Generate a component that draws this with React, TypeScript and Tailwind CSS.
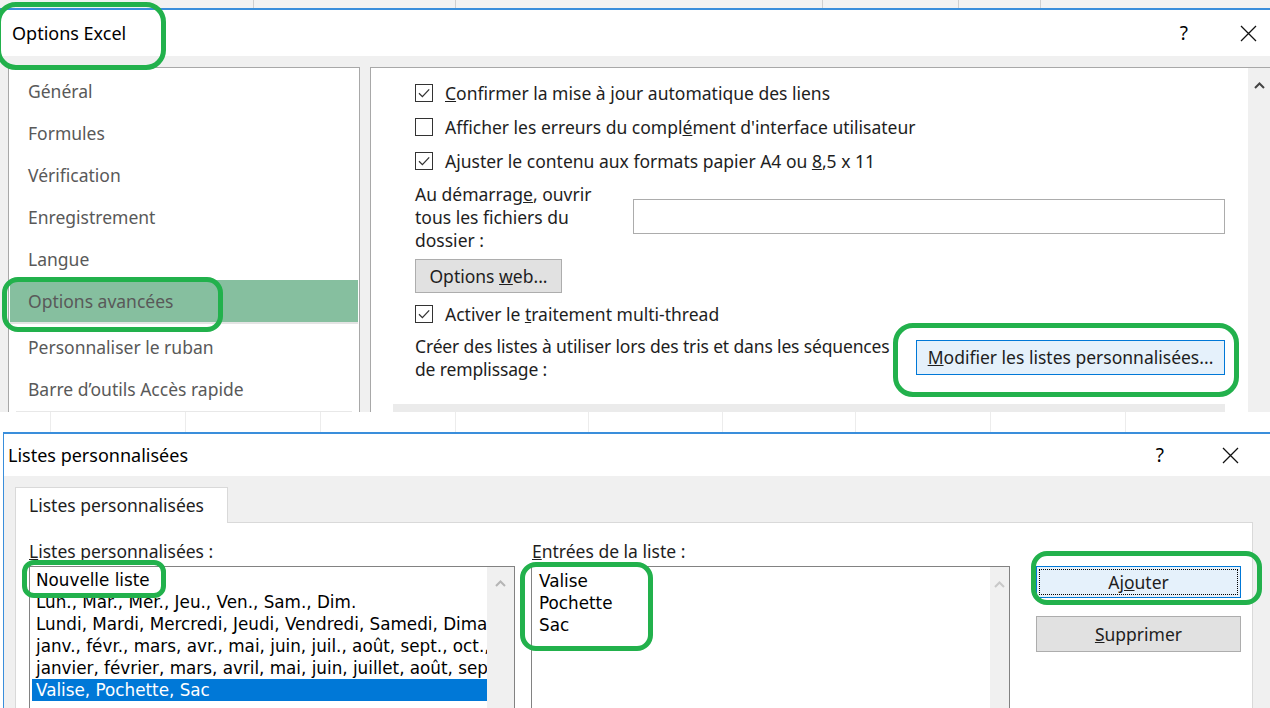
import React from "react";

// ─── Small pieces ────────────────────────────────────────────────────────────

const Check: React.FC<{ checked?: boolean }> = ({ checked }) => (
  <span className="w-[18px] h-[18px] border border-[#333] bg-white flex items-center justify-center shrink-0">
    {checked && (
      <svg width="14" height="14" viewBox="0 0 14 14">
        <path d="M2 7.2 L5.4 10.6 L12.2 3.4" fill="none" stroke="#333" strokeWidth="1.3" />
      </svg>
    )}
  </span>
);

const CloseX: React.FC = () => (
  <svg width="17" height="17" viewBox="0 0 17 17">
    <path d="M1 1 L16 16 M16 1 L1 16" stroke="#111" strokeWidth="1.3" />
  </svg>
);

const Caret: React.FC<{ color: string }> = ({ color }) => (
  <svg width="11" height="7" viewBox="0 0 11 7">
    <path d="M1 6 L5.5 1.5 L10 6" fill="none" stroke={color} strokeWidth="2" />
  </svg>
);

const CheckRow: React.FC<{ checked?: boolean; children: React.ReactNode }> = ({ checked, children }) => (
  <div className="h-[34px] flex items-center gap-[12px]">
    <Check checked={checked} />
    <span className="whitespace-nowrap">{children}</span>
  </div>
);

// Excel grid lines peeking between the two dialogs
const GridStrip: React.FC<{ h: string; bg: string; line: string; xs: number[] }> = ({ h, bg, line, xs }) => (
  <div className={`${h} ${bg} relative shrink-0`}>
    {xs.map((x) => (
      <span key={x} className={`absolute top-0 bottom-0 w-px ${line}`} style={{ left: x }} />
    ))}
  </div>
);

const NAV = [
  "Général",
  "Formules",
  "Vérification",
  "Enregistrement",
  "Langue",
  "Options avancées",
  "Personnaliser le ruban",
  "Barre d’outils Accès rapide",
];

const LISTS = [
  "Nouvelle liste",
  "Lun., Mar., Mer., Jeu., Ven., Sam., Dim.",
  "Lundi, Mardi, Mercredi, Jeudi, Vendredi, Samedi, Dimanche",
  "janv., févr., mars, avr., mai, juin, juil., août, sept., oct., nov., déc.",
  "janvier, février, mars, avril, mai, juin, juillet, août, septembre, octobre",
  "Valise, Pochette, Sac",
];

// ─── Options Excel (top) ─────────────────────────────────────────────────────

const OptionsExcel: React.FC = () => (
  <div className="h-[404px] shrink-0 flex flex-col border-t-2 border-[#3a8edb]">
    <div className="h-[46px] bg-white flex items-center justify-between pl-[12px] pr-[13px]">
      <span className="text-[18px] text-black">Options Excel</span>
      <div className="flex items-center gap-[52px]">
        <span className="text-[19px] text-black">?</span>
        <CloseX />
      </div>
    </div>

    <div className="flex-1 bg-[#f0f0f0] flex pt-[11px] pl-[8px] gap-[10px] overflow-hidden">
      {/* Left navigation */}
      <div className="w-[352px] border border-b-0 border-[#a8a8a8] bg-white pt-[2px] px-px">
        {NAV.map((label) => {
          const active = label === "Options avancées";
          return (
            <div
              key={label}
              className={`flex items-center pl-[18px] text-[#595959] ${
                active ? "h-[42px] bg-[#86bf9f] mb-[4px] shadow-[0_2px_0_#e4e4e4]" : "h-[42px]"
              }`}
            >
              {label}
            </div>
          );
        })}
        <div className="mx-[6px] mt-[1px] h-[3px] bg-[#e8e8e8]" />
      </div>

      {/* Right content */}
      <div className="flex-1 border-l border-t border-[#a8a8a8] bg-white flex">
        <div className="flex-1 pl-[44px] pr-[23px] pt-[8px] text-[#1e1e1e]">
          <CheckRow checked>
            <u>C</u>onfirmer la mise à jour automatique des liens
          </CheckRow>
          <CheckRow>
            Afficher les erreurs du compl<u>é</u>ment d'interface utilisateur
          </CheckRow>
          <CheckRow checked>
            Ajuster le contenu aux formats papier A4 ou <u>8</u>,5 x 11
          </CheckRow>

          <div className="flex mt-[5px]">
            <div className="w-[218px] leading-[23px]">
              Au démarrag<u>e</u>, ouvrir
              <br />
              tous les fichiers du
              <br />
              dossier :
            </div>
            <div className="flex-1 h-[35px] mt-[16px] border border-[#acacac] bg-white" />
          </div>

          <button className="mt-[7px] w-[147px] h-[34px] bg-[#e1e1e1] border border-[#adadad] text-[#1e1e1e]">
            Options <u>w</u>eb...
          </button>

          <div className="mt-[4px]">
            <CheckRow checked>
              Activer le <u>t</u>raitement multi-thread
            </CheckRow>
          </div>

          <div className="flex items-start mt-[4px]">
            <div className="leading-[23px] whitespace-nowrap tracking-[-0.15px]">
              Créer des listes à utiliser lors des tris et dans les séquences
              <br />
              de remplissage :
            </div>
            <button className="ml-auto mt-[5px] w-[309px] h-[35px] bg-[#e5f1fb] border border-[#0078d7] text-[#1e1e1e] whitespace-nowrap">
              <u>M</u>odifier les listes personnalisées...
            </button>
          </div>

          <div className="-ml-[22px] mt-[23px] h-[12px] bg-[#ebebeb]" />
        </div>

        <div className="w-[22px] bg-[#f0f0f0] flex justify-center pt-[14px]">
          <div className="h-[7px]">
            <Caret color="#444" />
          </div>
        </div>
      </div>
    </div>
  </div>
);

// ─── Listes personnalisées (bottom) ──────────────────────────────────────────

const ListesDialog: React.FC = () => (
  <div className="flex-1 ml-[3px] border-l border-t-2 border-[#3a8edb] flex flex-col">
    <div className="h-[42px] bg-white flex items-center justify-between pl-[4px] pr-[31px]">
      <span className="text-[18px] text-black">Listes personnalisées</span>
      <div className="flex items-center gap-[58px]">
        <span className="text-[19px] text-black">?</span>
        <CloseX />
      </div>
    </div>

    <div className="flex-1 bg-[#f0f0f0] pt-[11px] pl-[11px] overflow-hidden">
      <div className="w-[213px] h-[36px] bg-white border border-b-0 border-[#d9d9d9] flex items-center pl-[13px] text-[#1e1e1e] relative z-10">
        Listes personnalisées
      </div>
      <div className="-mt-px w-[1238px] h-[300px] bg-white border border-[#d9d9d9] pl-[13px] pt-[17px] flex text-[#1e1e1e]">
        {/* Left list */}
        <div className="w-[486px] flex flex-col">
          <div className="h-[26px] leading-[22px]">
            <u>L</u>istes personnalisées :
          </div>
          <div className="flex-1 border border-[#828282] flex">
            <div className="flex-1 pt-[2px] pl-[2px] overflow-hidden font-['DejaVu_Sans',sans-serif] text-[16.8px] text-black">
              {LISTS.map((row, i) => (
                <div
                  key={row}
                  className={`h-[22px] leading-[22px] pl-[4px] whitespace-nowrap overflow-hidden ${
                    i === LISTS.length - 1 ? "bg-[#0078d7] text-white" : ""
                  }`}
                >
                  {row}
                </div>
              ))}
            </div>
            <div className="w-[27px] bg-[#f0f0f0] flex justify-center pt-[13px]">
              <div className="h-[7px]">
                <Caret color="#b5b5b5" />
              </div>
            </div>
          </div>
        </div>

        {/* Entries */}
        <div className="w-[479px] ml-[16px] flex flex-col">
          <div className="h-[26px] leading-[22px] pl-px">
            <u>E</u>ntrées de la liste :
          </div>
          <div className="flex-1 border border-[#828282] flex">
            <div className="flex-1 pt-[3px] pl-[7px] font-['DejaVu_Sans',sans-serif] text-[16.8px] text-black">
              <div className="h-[22px] leading-[22px]">Valise</div>
              <div className="h-[22px] leading-[22px]">Pochette</div>
              <div className="h-[22px] leading-[22px]">Sac</div>
            </div>
            <div className="w-[19px] bg-[#f0f0f0] flex justify-center pt-[14px]">
              <div className="h-[7px]">
                <Caret color="#c8c8c8" />
              </div>
            </div>
          </div>
        </div>

        {/* Buttons */}
        <div className="ml-[26px] pt-[26px] flex flex-col gap-[18px]">
          <button className="w-[205px] h-[32px] bg-[#e5f1fb] border border-[#0078d7] p-[2px]">
            <span className="w-full h-full border border-dotted border-black flex items-center justify-center">
              Aj<u>o</u>uter
            </span>
          </button>
          <button className="w-[205px] h-[36px] bg-[#e1e1e1] border border-[#adadad]">
            <u>S</u>upprimer
          </button>
        </div>
      </div>
    </div>
  </div>
);

// ─── Green annotation rings ──────────────────────────────────────────────────

const RINGS = [
  "left-[-4px] top-[2px] w-[170px] h-[68px] rounded-[20px]",
  "left-[2px] top-[277px] w-[221px] h-[55px] rounded-[16px]",
  "left-[893px] top-[323px] w-[346px] h-[74px] rounded-[20px]",
  "left-[22px] top-[560px] w-[144px] h-[38px] rounded-[12px]",
  "left-[520px] top-[562px] w-[133px] h-[89px] rounded-[16px]",
  "left-[1031px] top-[551px] w-[231px] h-[54px] rounded-[16px]",
];

export default function App() {
  return (
    <div className="w-[1270px] h-[708px] overflow-hidden relative bg-white flex flex-col font-['Noto_Sans',sans-serif] text-[17.5px]">
      <GridStrip h="h-[8px]" bg="bg-[#f2f2f2]" line="bg-[#cfcfcf]" xs={[253, 455, 822, 958, 1040]} />
      <OptionsExcel />
      <GridStrip h="h-[20px]" bg="bg-white" line="bg-[#ececec]" xs={[50, 185, 320, 455, 588, 722, 855, 990, 1125]} />
      <ListesDialog />

      {RINGS.map((c) => (
        <div key={c} className={`absolute border-[5px] border-[#22b14c] pointer-events-none ${c}`} />
      ))}
    </div>
  );
}
